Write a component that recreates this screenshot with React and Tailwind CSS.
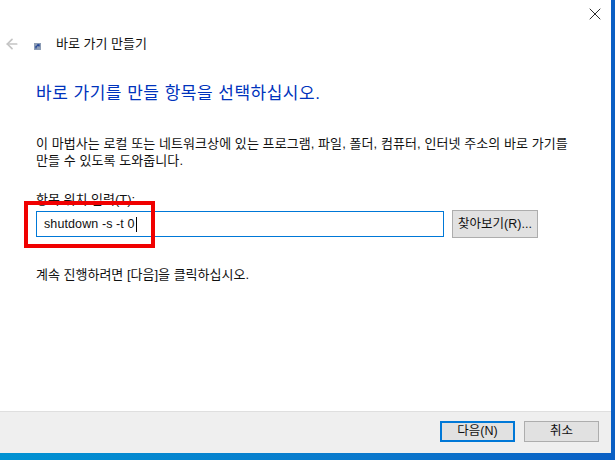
import { ArrowLeft, X } from 'lucide-react'

function Btn({ children, primary }) {
  return (
    <button className={'w-[75px] h-[21px] flex items-center justify-center bg-[#e1e1e1] text-[12.5px] text-[#111] ' + (primary ? 'border-2 border-[#0078d7]' : 'border border-[#adadad]')}>
      {children}
    </button>
  )
}

export default function App() {
  return (
    <div className="w-[615px] h-[460px] overflow-hidden flex flex-col bg-[linear-gradient(90deg,#0092d2_0%,#0a78cc_60%,#0a5fc4_100%)] font-['Liberation_Sans','Noto_Sans_CJK_KR',sans-serif]">
      <div className="w-[611px] h-[453px] bg-white flex flex-col relative">
        {/* 상단 */}
        <div className="h-[411px] flex flex-col">
          <div className="flex justify-end pt-[4px] pr-[6px]">
            <X size={20} strokeWidth={1} className="text-black" />
          </div>
          <div className="flex items-center h-[20px] mt-[10px] pl-[4px]">
            <ArrowLeft size={16} strokeWidth={2.6} className="text-[#c4c4c4]" />
            <svg width="7" height="7" viewBox="0 0 7 7" className="ml-[14px] mt-[5px]">
              <rect width="7" height="7" fill="#8d9db5" />
              <path d="M2 5.5 L2 3.5 L4.5 2 M3.2 1.8 L5 1.8 L5 3.6" fill="none" stroke="#1c3f94" strokeWidth="1.2" />
            </svg>
            <span className="ml-[15px] text-[13px] leading-[20px] text-[#111]">바로 가기 만들기</span>
          </div>
          <h1 className="ml-[36px] mt-[29px] text-[17px] tracking-[0.5px] leading-[22px] text-[#0033bc]">바로 가기를 만들 항목을 선택하십시오.</h1>
          <p className="ml-[36px] mt-[30px] text-[13px] tracking-[0.07px] leading-[17px] text-[#111]">
            이 마법사는 로컬 또는 네트워크상에 있는 프로그램, 파일, 폴더, 컴퓨터, 인터넷 주소의 바로 가기를<br />만들 수 있도록 도와줍니다.
          </p>
          <label className="ml-[36px] mt-[22px] text-[13px] leading-[17px] text-[#111]">항목 위치 입력(T):</label>
          <div className="flex items-center ml-[36px] mt-[2px] gap-[8px]">
            <div className="w-[408px] h-[26px] border border-[#0078d7] flex items-center pl-[7px] text-[12.5px] tracking-[0.1px] text-[#111]">
              shutdown -s -t 0<span className="w-px h-[15px] ml-px bg-black" />
            </div>
            <button className="w-[86px] h-[28px] flex items-center justify-center bg-[#e1e1e1] border border-[#adadad] text-[12.5px] text-[#111]">찾아보기(R)...</button>
          </div>
          <p className="ml-[36px] mt-[28px] text-[13px] leading-[17px] text-[#111]">계속 진행하려면 [다음]을 클릭하십시오.</p>
        </div>
        {/* 하단 버튼 */}
        <div className="flex-1 bg-[#efefef] border-t border-[#dfdfdf] flex items-start justify-end gap-[9px] pt-[9px] pr-[12px]">
          <Btn primary>다음(N)</Btn>
          <Btn>취소</Btn>
        </div>
        {/* 빨간 표시 */}
        <div className="absolute left-[24px] top-[201px] w-[131px] h-[47px] border-[4px] border-[#f00000]" />
      </div>
    </div>
  )
}
